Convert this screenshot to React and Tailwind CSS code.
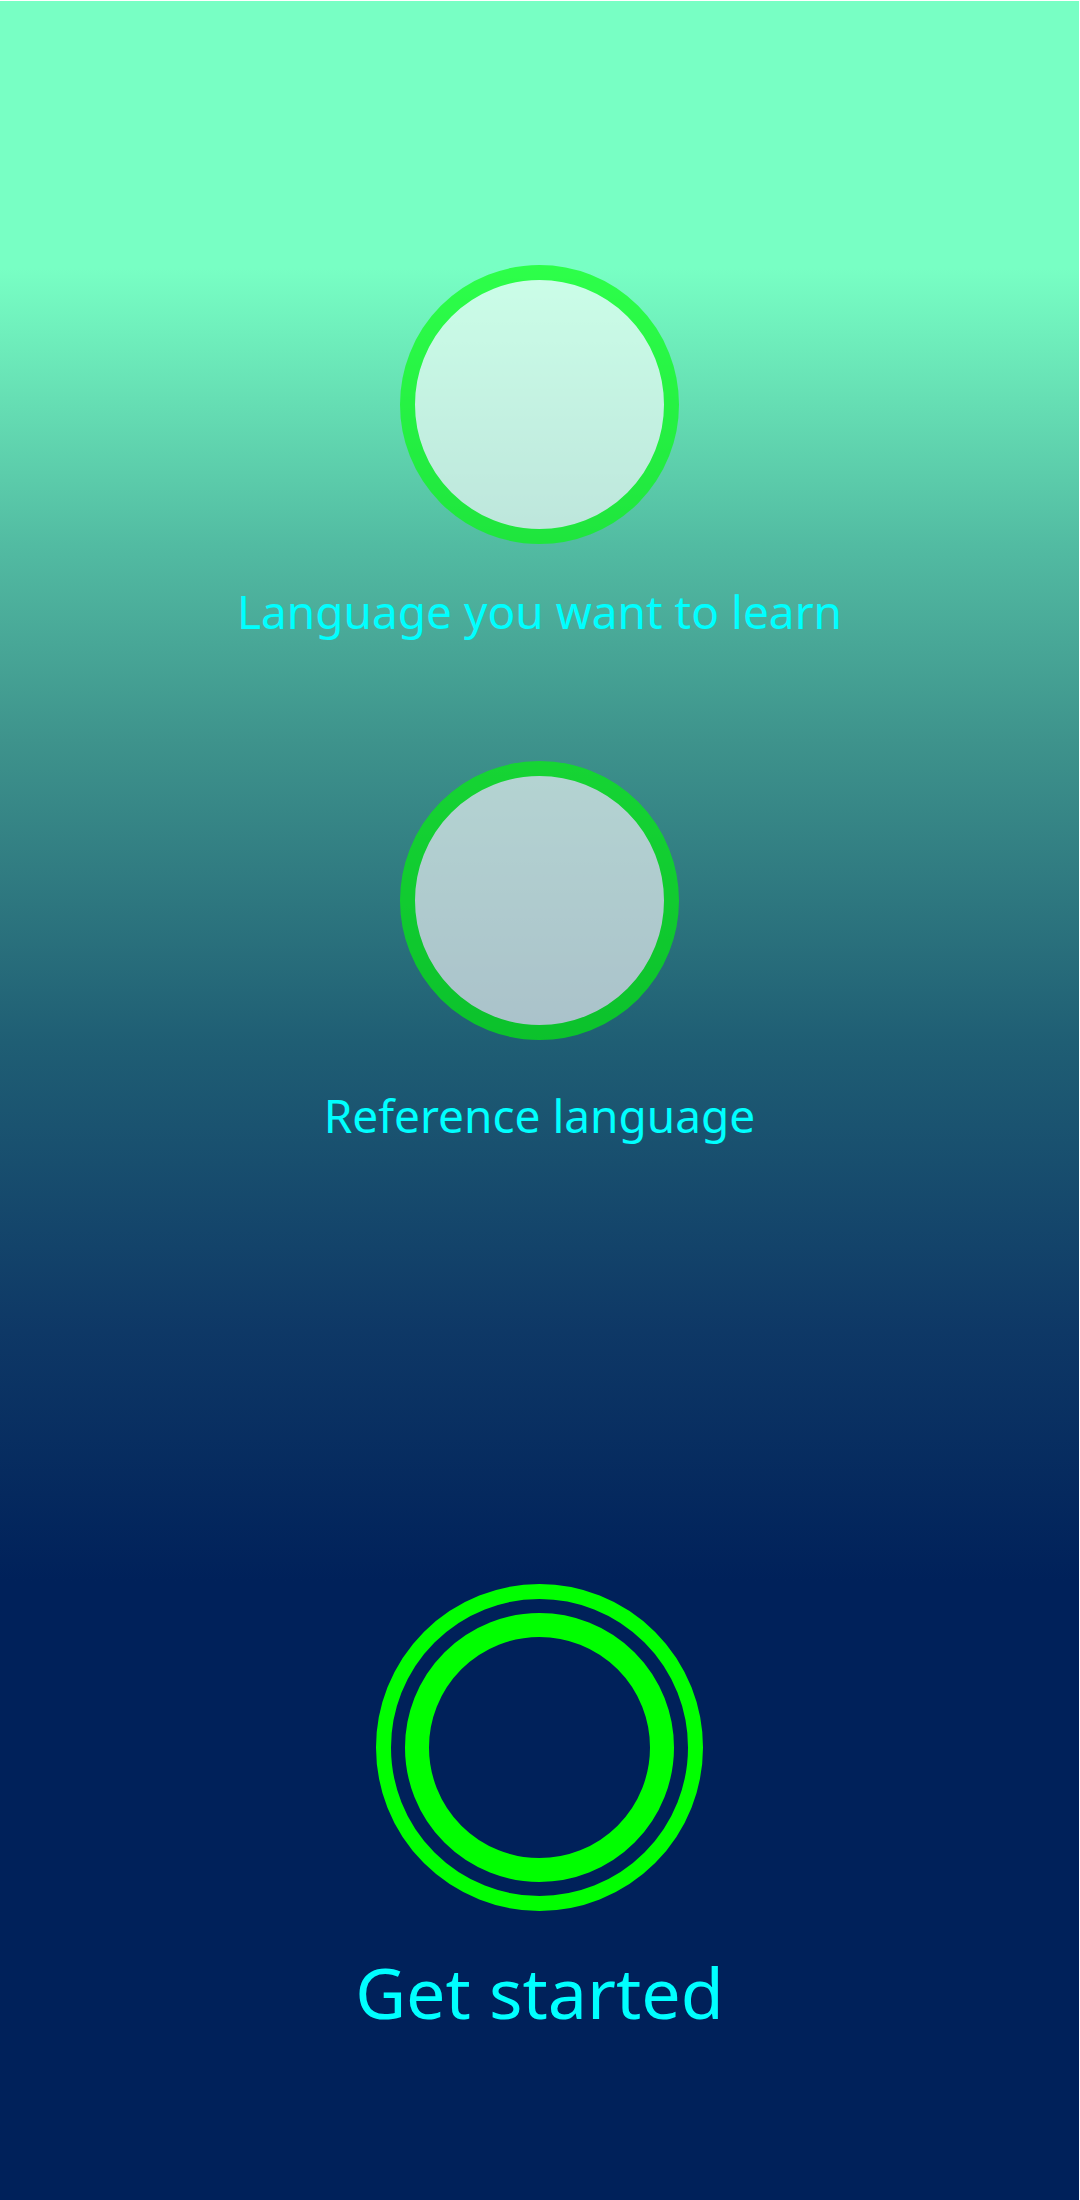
import React from "react";

/**
 * Onboarding screen: pick two languages, then start.
 */

const font = { fontFamily: '"Noto Sans", "Open Sans", sans-serif' };

function LanguagePicker({ label, className, labelGap }) {
  return (
    <div className={`flex flex-col items-center ${className || ""}`}>
      <button className="w-[279px] h-[279px] rounded-full bg-white border-[15px] border-[#00ff00] opacity-[0.62]" />
      <p className={`${labelGap} text-[46px] leading-none text-[#00ffff]`}>{label}</p>
    </div>
  );
}

export default function App() {
  return (
    <div
      style={font}
      className="min-h-screen h-[2200px] w-full flex flex-col items-center border-t border-r border-white bg-[linear-gradient(to_bottom,#78ffc4_0px,#78ffc4_267px,#52bba2_545px,#3e938c_740px,#1f5e74_1041px,#0e3866_1330px,#00215a_1580px,#00215a_100%)]"
    >
      {/* Language choices */}
      <LanguagePicker label="Language you want to learn" className="mt-[264px]" labelGap="mt-[44px]" />
      <LanguagePicker label="Reference language" className="mt-[127px]" labelGap="mt-[52px]" />

      {/* Start button */}
      <button className="mt-[446px] w-[327px] h-[327px] rounded-full border-[15px] border-[#00ff00] flex items-center justify-center">
        <span className="w-[269px] h-[269px] rounded-full border-[24px] border-[#00ff00]" />
      </button>
      <p className="mt-[46px] text-[70px] leading-none text-[#00ffff]">Get started</p>
    </div>
  );
}
